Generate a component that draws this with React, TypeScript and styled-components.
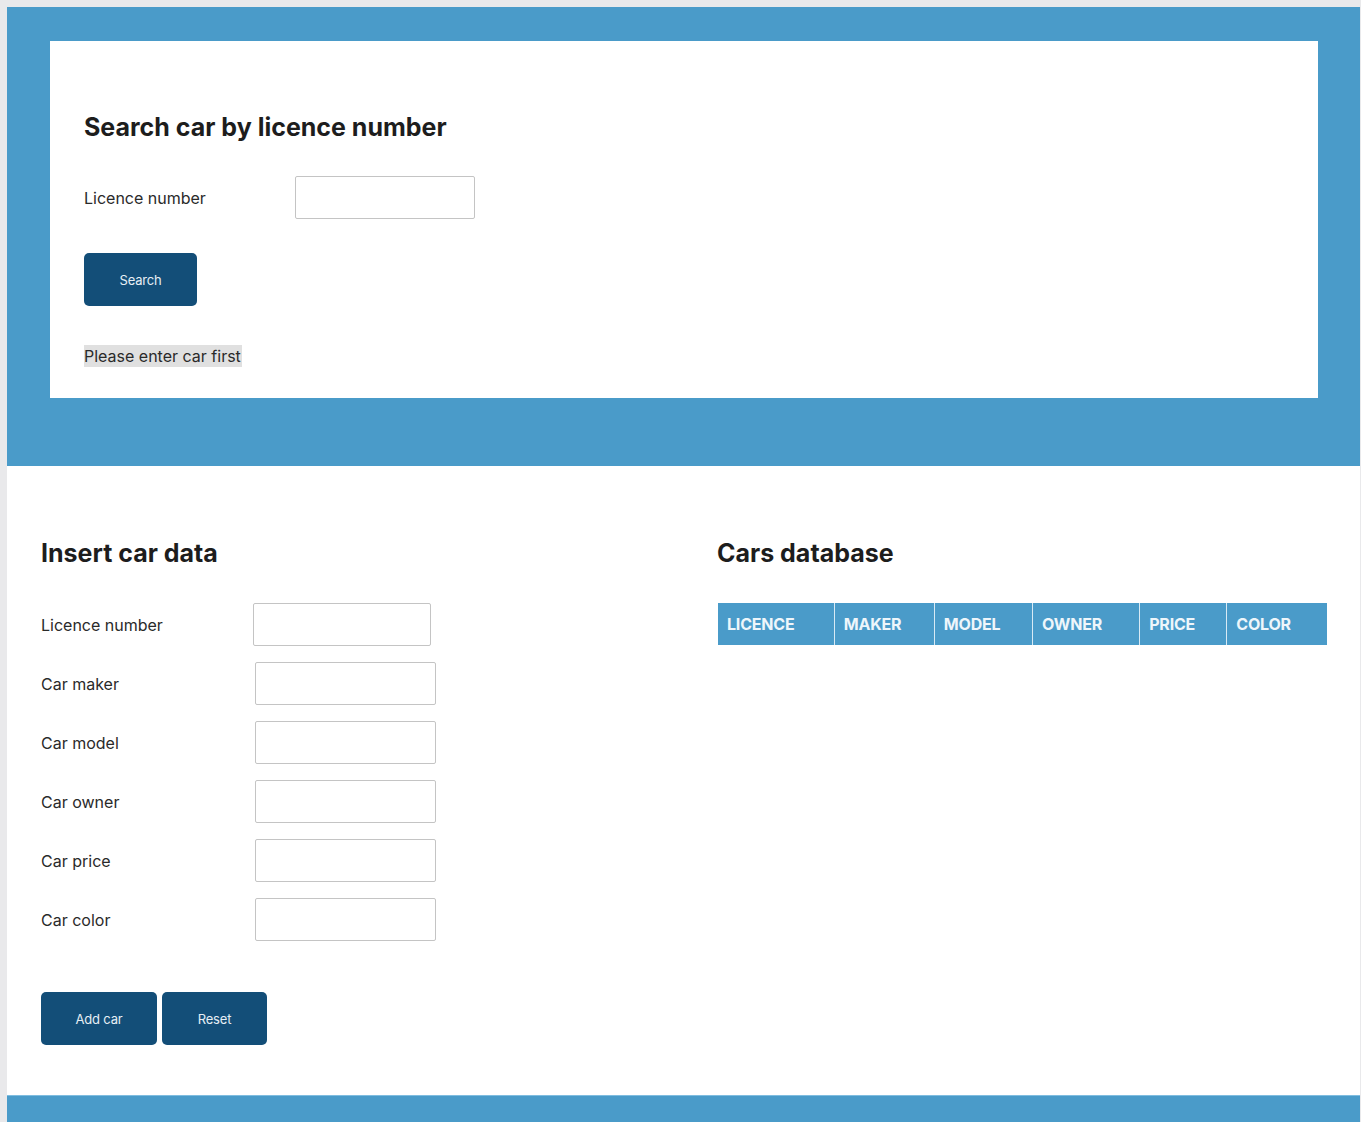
import styled, { createGlobalStyle } from 'styled-components';

const GlobalStyle = createGlobalStyle`
  body {
    margin: 0;
    background: #e9e9eb;
    font-family: Inter, "Noto Sans", sans-serif;
    color: #1c1c1c;
  }
  * { box-sizing: border-box; }
`;

const Page = styled.div`
  padding: 7px 1px 0 7px;
  min-height: 1122px;
  display: flex;
  flex-direction: column;
`;

const Hero = styled.section`
  background: #4a9bc9;
  padding: 34px 42px 68px 43px;
`;

const SearchCard = styled.div`
  background: #fff;
  height: 357px;
  padding: 72px 34px 0;
`;

const Heading = styled.h2`
  margin: 0;
  font-size: 25px;
  line-height: 28px;
  font-weight: 700;
  letter-spacing: 0;
  color: #1d1d1d;
`;

const FieldRow = styled.div<{ $labelWidth: number }>`
  display: grid;
  grid-template-columns: ${(p) => p.$labelWidth}px auto;
  align-items: center;
  justify-content: start;
`;

const Label = styled.label`
  font-size: 16px;
  color: #2a2a2a;
  letter-spacing: 0;
`;

const Input = styled.input<{ $width: number }>`
  width: ${(p) => p.$width}px;
  height: 43px;
  border: 1.5px solid #c4c4c4;
  border-radius: 2px;
  background: #fff;
  font: inherit;
  outline: none;
`;

const Button = styled.button<{ $width: number }>`
  width: ${(p) => p.$width}px;
  height: 53px;
  border: none;
  border-radius: 5px;
  background: #134e78;
  color: #e6eef5;
  font-family: Inter, sans-serif;
  font-size: 13px;
  letter-spacing: -0.2px;
  cursor: pointer;
`;

const Notice = styled.span`
  display: inline-block;
  background: #e0e0e0;
  font-size: 16px;
  line-height: 19px;
  color: #2a2a2a;
  padding: 2px 1px 1px 0;
`;

const SearchForm = styled.div`
  display: flex;
  flex-direction: column;
  align-items: flex-start;
  margin-top: 35px;
`;

const SearchAction = styled.div`
  margin-top: 34px;
`;

const NoticeLine = styled.div`
  margin-top: 39px;
`;

const Main = styled.main`
  background: #fff;
  flex: 1;
  display: grid;
  grid-template-columns: 676px 1fr;
  padding: 73px 27px 0 34px;
`;

const Column = styled.div`
  display: flex;
  flex-direction: column;
`;

const Fields = styled.div`
  display: flex;
  flex-direction: column;
  gap: 16px;
  margin-top: 36px;
`;

const ButtonRow = styled.div`
  display: flex;
  gap: 5px;
  margin-top: 51px;
  margin-bottom: 49px;
`;

const Table = styled.table`
  margin-top: 36px;
  width: 609px;
  border-collapse: collapse;
  margin-left: 1px;
`;

const Th = styled.th<{ $width: number }>`
  width: ${(p) => p.$width}px;
  height: 42px;
  background: #4a9bc9;
  color: #eef6fb;
  font-size: 16px;
  font-weight: 700;
  text-align: left;
  padding: 0 9px;
  letter-spacing: -0.2px;
  border-left: 1px solid #d8eaf5;
  &:first-child { border-left: none; }
`;

const Footer = styled.footer`
  background: #4a9bc9;
  height: 27px;
  border-top: 1px solid #7fbde0;
`;

const carFields = [
  { label: 'Licence number', shift: 0 },
  { label: 'Car maker', shift: 2 },
  { label: 'Car model', shift: 2 },
  { label: 'Car owner', shift: 2 },
  { label: 'Car price', shift: 2 },
  { label: 'Car color', shift: 2 },
];

const columns = [
  { name: 'LICENCE', width: 116 },
  { name: 'MAKER', width: 100 },
  { name: 'MODEL', width: 98 },
  { name: 'OWNER', width: 107 },
  { name: 'PRICE', width: 87 },
  { name: 'COLOR', width: 100 },
];

export default function App() {
  return (
    <>
      <GlobalStyle />
      <Page>
        <Hero>
          <SearchCard>
            <Heading>Search car by licence number</Heading>
            <SearchForm>
              <FieldRow $labelWidth={211}>
                <Label>Licence number</Label>
                <Input $width={180} />
              </FieldRow>
              <SearchAction>
                <Button $width={113}>Search</Button>
              </SearchAction>
              <NoticeLine>
                <Notice>Please enter car first</Notice>
              </NoticeLine>
            </SearchForm>
          </SearchCard>
        </Hero>
        <Main>
          <Column>
            <Heading>Insert car data</Heading>
            <Fields>
              {carFields.map((f) => (
                <FieldRow key={f.label} $labelWidth={212 + f.shift}>
                  <Label>{f.label}</Label>
                  <Input $width={f.shift ? 181 : 178} />
                </FieldRow>
              ))}
            </Fields>
            <ButtonRow>
              <Button $width={116}>Add car</Button>
              <Button $width={105}>Reset</Button>
            </ButtonRow>
          </Column>
          <Column>
            <Heading>Cars database</Heading>
            <Table>
              <thead>
                <tr>
                  {columns.map((c) => (
                    <Th key={c.name} $width={c.width}>
                      {c.name}
                    </Th>
                  ))}
                </tr>
              </thead>
            </Table>
          </Column>
        </Main>
        <Footer />
      </Page>
    </>
  );
}
